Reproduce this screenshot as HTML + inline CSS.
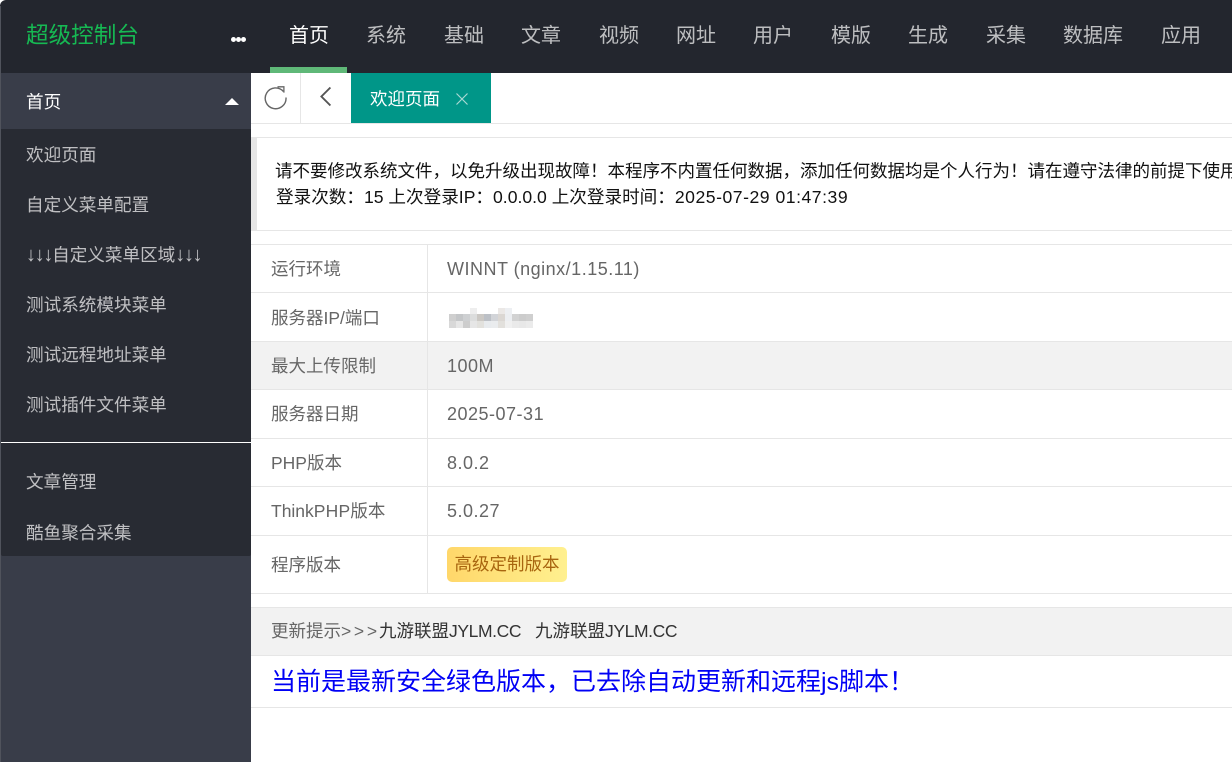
<!DOCTYPE html>
<html lang="zh-CN"><head><meta charset="utf-8"><title>超级控制台</title>
<style>
*{margin:0;padding:0;box-sizing:border-box}
html,body{width:1232px;height:762px;overflow:hidden;background:#fff}
body{font-family:"Liberation Sans","Noto Sans CJK SC",sans-serif;position:relative}
.a{position:absolute;white-space:nowrap}
.b{position:absolute}
.nav{top:0;height:73px;line-height:72px;font-size:20px;color:rgba(255,255,255,.7);width:80px;text-align:center}
.m{left:26px;font-size:17.6px;line-height:50px;height:50px;color:rgba(255,255,255,.7)}
.l{left:271px;font-size:17.5px;color:#666;height:26px;line-height:26px}
.v{left:447px;font-size:18px;letter-spacing:.5px;color:#666;height:26px;line-height:26px}
.h{position:absolute;left:251px;width:981px;height:1px;background:#e6e6e6}
.ar{font-size:20px;letter-spacing:-1.3px;font-weight:bold}
.j{letter-spacing:-.4px}
</style></head><body>
<div class="b" style="left:0;top:0;width:1232px;height:73px;background:#23262e;border-top-left-radius:6px"></div>
<div class="b" style="left:0;top:73px;width:251px;height:689px;background:#393d49"></div>
<div class="b" style="left:0;top:6px;width:1px;height:756px;background:#50535c"></div>
<div class="a" style="left:26px;top:17px;font-size:22.6px;line-height:38px;color:#16b953">超级控制台</div>
<div class="b" style="left:231px;top:37px;width:5px;height:5px;border-radius:50%;background:#fff"></div>
<div class="b" style="left:236px;top:37px;width:5px;height:5px;border-radius:50%;background:#fff"></div>
<div class="b" style="left:241px;top:37px;width:5px;height:5px;border-radius:50%;background:#fff"></div>
<div class="a nav" style="left:269px;color:#fff">首页</div>
<div class="a nav" style="left:346px">系统</div>
<div class="a nav" style="left:424px">基础</div>
<div class="a nav" style="left:501px">文章</div>
<div class="a nav" style="left:579px">视频</div>
<div class="a nav" style="left:656px">网址</div>
<div class="a nav" style="left:733px">用户</div>
<div class="a nav" style="left:811px">模版</div>
<div class="a nav" style="left:888px">生成</div>
<div class="a nav" style="left:966px">采集</div>
<div class="a nav" style="left:1053px">数据库</div>
<div class="a nav" style="left:1141px">应用</div>
<div class="b" style="left:270px;top:67px;width:77px;height:6px;background:#5fb878"></div>

<div class="b" style="left:1px;top:129px;width:250px;height:427px;background:#282b33;border-radius:0 0 2px 2px"></div>
<div class="a m" style="top:77px;color:#fff">首页</div>
<div class="b" style="left:225px;top:98px;width:0;height:0;border-left:7px solid transparent;border-right:7px solid transparent;border-bottom:7px solid #fff"></div>
<div class="a m" style="top:130px">欢迎页面</div>
<div class="a m" style="top:180px">自定义菜单配置</div>
<div class="a m" style="top:230px"><span class="ar">↓↓↓</span>自定义菜单区域<span class="ar">↓↓↓</span></div>
<div class="a m" style="top:280px">测试系统模块菜单</div>
<div class="a m" style="top:330px">测试远程地址菜单</div>
<div class="a m" style="top:380px">测试插件文件菜单</div>
<div class="b" style="left:1px;top:442px;width:250px;height:1px;background:#fff"></div>
<div class="a m" style="top:457px">文章管理</div>
<div class="a m" style="top:508px">酷鱼聚合采集</div>

<div class="h" style="top:123px"></div>
<div class="b" style="left:300px;top:73px;width:1px;height:50px;background:#e6e6e6"></div>
<svg class="b" style="left:263px;top:85px" width="25" height="25" viewBox="0 0 25 25" fill="none" stroke="#666" stroke-width="1.4"><path d="M20.5 6.5A10.4 10.4 0 1 0 23 12.5"/><path d="M14.5 1.8h6.4V7.6" stroke-width="1.3"/></svg>
<svg class="b" style="left:318px;top:86px" width="16" height="22" viewBox="0 0 16 22" fill="none" stroke="#555" stroke-width="1.9"><path d="M12.4 1.5L3.4 10.5 12.4 19.5"/></svg>
<div class="b" style="left:351px;top:73px;width:140px;height:50px;background:#009688"></div>
<div class="a" style="left:370px;top:86px;font-size:17.5px;line-height:26px;color:#fff">欢迎页面</div>
<svg class="b" style="left:455px;top:92px" width="14" height="14" viewBox="0 0 14 14" stroke="#a8d8d3" stroke-width="1.2"><path d="M1.5 1.5l11 11M12.5 1.5l-11 11"/></svg>

<div class="h" style="top:137px"></div>
<div class="h" style="top:230px"></div>
<div class="b" style="left:251px;top:138px;width:6px;height:92px;background:#e6e6e6"></div>
<div class="a" style="left:275px;top:158px;font-size:17.5px;line-height:26px;color:#111;width:957px;overflow:hidden">请不要修改系统文件，以免升级出现故障！本程序不内置任何数据，添加任何数据均是个人行为！请在遵守法律的前提下使用</div>
<div class="a" style="left:276px;top:184px;font-size:17.6px;line-height:26px;color:#111">登录次数：15 上次登录IP：0.0.0.0 上次登录时间：<span style="letter-spacing:.52px">2025-07-29 01:47:39</span></div>

<div class="b" style="left:251px;top:342px;width:981px;height:47px;background:#f2f2f2"></div>
<div class="h" style="top:244px"></div>
<div class="h" style="top:292px"></div>
<div class="h" style="top:341px"></div>
<div class="h" style="top:389px"></div>
<div class="h" style="top:438px"></div>
<div class="h" style="top:486px"></div>
<div class="h" style="top:535px"></div>
<div class="h" style="top:593px"></div>
<div class="b" style="left:427px;top:244px;width:1px;height:350px;background:#e6e6e6"></div>
<div class="a l" style="top:256px">运行环境</div><div class="a v" style="top:256px">WINNT (nginx/1.15.11)</div>
<div class="a l" style="top:305px">服务器IP/端口</div>
<svg class="b" style="left:449px;top:307px" width="84" height="22" viewBox="0 0 84 22">
<rect x="21" y="1" width="7" height="7" fill="#eeeeee"/><rect x="49" y="1" width="7" height="7" fill="#ebe8e6"/><rect x="56" y="1" width="7" height="7" fill="#edeff2"/>
<rect x="0" y="7" width="7" height="7" fill="#cfcfcf"/><rect x="7" y="7" width="7" height="7" fill="#c4c6c8"/><rect x="14" y="7" width="7" height="7" fill="#ced0d2"/><rect x="21" y="7" width="7" height="7" fill="#dcdddd"/><rect x="28" y="7" width="7" height="7" fill="#cbc8c4"/><rect x="35" y="7" width="7" height="7" fill="#bcc0c6"/><rect x="42" y="7" width="7" height="7" fill="#d2d4d8"/><rect x="49" y="7" width="7" height="7" fill="#dbd7d3"/><rect x="56" y="7" width="7" height="7" fill="#eceef1"/><rect x="63" y="7" width="7" height="7" fill="#d2d2d2"/><rect x="70" y="7" width="7" height="7" fill="#cccccc"/><rect x="77" y="7" width="7" height="7" fill="#cfcfcf"/>
<rect x="0" y="14" width="7" height="7" fill="#d8d8d8"/><rect x="7" y="14" width="7" height="7" fill="#e6e6e6"/><rect x="14" y="14" width="7" height="7" fill="#cdcdcd"/><rect x="21" y="14" width="7" height="7" fill="#e6e6e6"/><rect x="28" y="14" width="7" height="7" fill="#e2e1dd"/><rect x="35" y="14" width="7" height="7" fill="#e8ebee"/><rect x="42" y="14" width="7" height="7" fill="#eaecee"/><rect x="49" y="14" width="7" height="7" fill="#e2e0dc"/><rect x="56" y="14" width="7" height="7" fill="#f0f0f0"/><rect x="63" y="14" width="7" height="7" fill="#eaeaea"/><rect x="70" y="14" width="7" height="7" fill="#e8e8e8"/><rect x="77" y="14" width="7" height="7" fill="#ebebeb"/>
</svg>
<div class="a l" style="top:353px">最大上传限制</div><div class="a v" style="top:353px">100M</div>
<div class="a l" style="top:401px">服务器日期</div><div class="a v" style="top:401px">2025-07-31</div>
<div class="a l" style="top:450px">PHP版本</div><div class="a v" style="top:450px">8.0.2</div>
<div class="a l" style="top:498px">Think<span style="letter-spacing:.2px">PHP</span>版本</div><div class="a v" style="top:498px">5.0.27</div>
<div class="a l" style="top:552px">程序版本</div>
<div class="a" style="left:447px;top:547px;width:120px;height:35px;border-radius:5px;background:linear-gradient(90deg,#ffd76a,#fff08f);color:#a8650f;font-size:17.5px;line-height:35px;text-align:center">高级定制版本</div>

<div class="b" style="left:251px;top:608px;width:981px;height:47px;background:#f2f2f2"></div>
<div class="h" style="top:607px"></div>
<div class="h" style="top:655px"></div>
<div class="h" style="top:707px"></div>
<div class="a" style="left:271px;top:618px;font-size:17.5px;line-height:26px;color:#666">更新提示<span style="letter-spacing:2.7px">&gt;&gt;&gt;</span></div>
<div class="a" style="left:379px;top:618px;font-size:17.5px;line-height:26px;color:#333">九游联盟<span class="j">JYLM.CC</span></div>
<div class="a" style="left:535px;top:618px;font-size:17.5px;line-height:26px;color:#333">九游联盟<span class="j">JYLM.CC</span></div>
<div class="a" style="left:271px;top:665px;font-size:25px;line-height:34px;color:#0000f5">当前是最新安全绿色版本，已去除自动更新和远程js脚本！</div>
</body></html>
